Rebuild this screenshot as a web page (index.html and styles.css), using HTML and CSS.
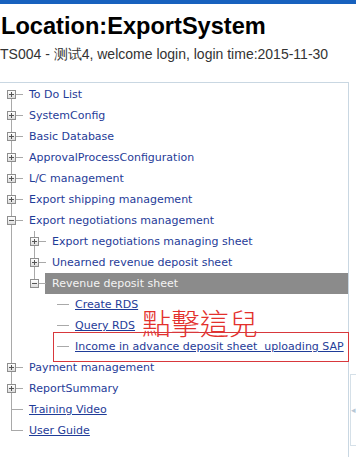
FILE: index.html
```html
<!doctype html>
<html lang="en">
  <head>
    <meta charset="UTF-8" />
    <meta name="viewport" content="width=device-width, initial-scale=1.0" />
    <title>Location:ExportSystem</title>
    <link rel="stylesheet" href="styles.css">
  </head>
  <body>
    <div class="topbar"></div>
    <h1 class="loc">Location:ExportSystem</h1>
    <p class="who">TS004 - 测试4, welcome login, login time:2015-11-30</p>

    <div class="main">
      <div class="tree">
        <div class="node"><i class="c v top h"><b class="box plus"></b></i><span class="lbl">To Do List</span></div>
        <div class="node"><i class="c v h"><b class="box plus"></b></i><span class="lbl">SystemConfig</span></div>
        <div class="node"><i class="c v h"><b class="box plus"></b></i><span class="lbl">Basic Database</span></div>
        <div class="node"><i class="c v h"><b class="box plus"></b></i><span class="lbl">ApprovalProcessConfiguration</span></div>
        <div class="node"><i class="c v h"><b class="box plus"></b></i><span class="lbl">L/C management</span></div>
        <div class="node"><i class="c v h"><b class="box plus"></b></i><span class="lbl">Export shipping management</span></div>
        <div class="node"><i class="c v h"><b class="box"></b></i><span class="lbl">Export negotiations management</span></div>

        <div class="node"><i class="c v"></i><i class="c v h"><b class="box plus"></b></i><span class="lbl">Export negotiations managing sheet</span></div>
        <div class="node"><i class="c v"></i><i class="c v h"><b class="box plus"></b></i><span class="lbl">Unearned revenue deposit sheet</span></div>
        <div class="node"><i class="c v"></i><i class="c v end h"><b class="box"></b></i><span class="lbl sel">Revenue deposit sheet</span></div>

        <div class="node"><i class="c v"></i><i class="c"></i><i class="c h"></i><a href="#" class="lbl">Create RDS</a></div>
        <div class="node"><i class="c v"></i><i class="c"></i><i class="c h"></i><a href="#" class="lbl">Query RDS</a></div>
        <div class="node"><i class="c v"></i><i class="c"></i><i class="c h"></i><a href="#" class="lbl">Income in advance deposit sheet&nbsp; uploading SAP</a></div>

        <div class="node"><i class="c v h"><b class="box plus"></b></i><span class="lbl">Payment management</span></div>
        <div class="node"><i class="c v h"><b class="box plus"></b></i><span class="lbl">ReportSummary</span></div>
        <div class="node"><i class="c v h"></i><a href="#" class="lbl">Training Video</a></div>
        <div class="node"><i class="c v end h"></i><a href="#" class="lbl">User Guide</a></div>

        <!-- 截图上的标注 -->
        <div class="note-text">點擊這兒</div>
        <div class="note-box"></div>
      </div>
      <div class="side">
        <div class="toggle">&#9666;</div>
      </div>
    </div>
  </body>
</html>
```

FILE: styles.css
```css
* {
  padding: 0;
  margin: 0;
}
body {
  background-color: #fff;
  font-family: "Liberation Sans", Arial, sans-serif;
  overflow: hidden;
}
.topbar {
  height: 4px;
  background-color: #1761be;
}
.loc {
  font-size: 23.6px;
  line-height: 28px;
  font-weight: bold;
  color: #000;
  margin: 8px 0 0 1px;
}
.who {
  font-size: 14px;
  line-height: 18px;
  color: #333;
  margin-top: 5px;
  white-space: nowrap;
}
.main {
  display: flex;
  margin-top: 19px;
}
.tree {
  position: relative;
  width: 348px;
  height: 380px;
  flex: none;
  border-top: 1px solid #c9d7e2;
  border-right: 1px solid #c9d7e2;
  font-family: "DejaVu Sans", Verdana, sans-serif;
  font-size: 11px;
  padding-top: 1px;
}
.node {
  display: flex;
  height: 21px;
}
.c {
  position: relative;
  width: 23px;
  height: 21px;
  flex: none;
}
.c.v::before {
  content: "";
  position: absolute;
  left: 11px;
  top: 0;
  bottom: 0;
  width: 1px;
  background-color: #a9a9a9;
}
.c.v.top::before {
  top: 10px;
}
.c.v.end::before {
  bottom: 10px;
}
.c.h::after {
  content: "";
  position: absolute;
  left: 11px;
  right: 0;
  top: 10px;
  height: 1px;
  background-color: #a9a9a9;
}
.box {
  position: absolute;
  left: 7px;
  top: 6px;
  width: 7px;
  height: 7px;
  border: 1px solid #8e8e8e;
  background: linear-gradient(#fff, #dcdcdc);
  z-index: 1;
}
.box::before {
  content: "";
  position: absolute;
  left: 1px;
  top: 3px;
  width: 5px;
  height: 1px;
  background-color: #555;
}
.box.plus::after {
  content: "";
  position: absolute;
  left: 3px;
  top: 1px;
  width: 1px;
  height: 5px;
  background-color: #555;
}
.lbl {
  line-height: 21px;
  padding: 0 6px;
  color: #1f3c98;
  white-space: nowrap;
}
a.lbl {
  text-decoration: underline;
}
.lbl.sel {
  flex: 1;
  margin-left: -1px;
  padding-left: 7px;
  background-color: #8b8b8b;
  color: #f3f3f3;
}
.note-text {
  position: absolute;
  left: 142px;
  top: 225px;
  font-family: "Noto Sans CJK TC", sans-serif;
  font-size: 29px;
  line-height: 28px;
  font-weight: 300;
  color: #e3302c;
}
.note-box {
  position: absolute;
  left: 53px;
  top: 249px;
  width: 294px;
  height: 28px;
  border: 1px solid #d8383c;
}
.side {
  flex: 1;
  padding-top: 292px;
}
.toggle {
  height: 70px;
  margin-left: 1px;
  border: 1px solid #d5e0e8;
  border-right: none;
  color: #b7c8d6;
  font-size: 9px;
  line-height: 70px;
  text-align: center;
}
```
